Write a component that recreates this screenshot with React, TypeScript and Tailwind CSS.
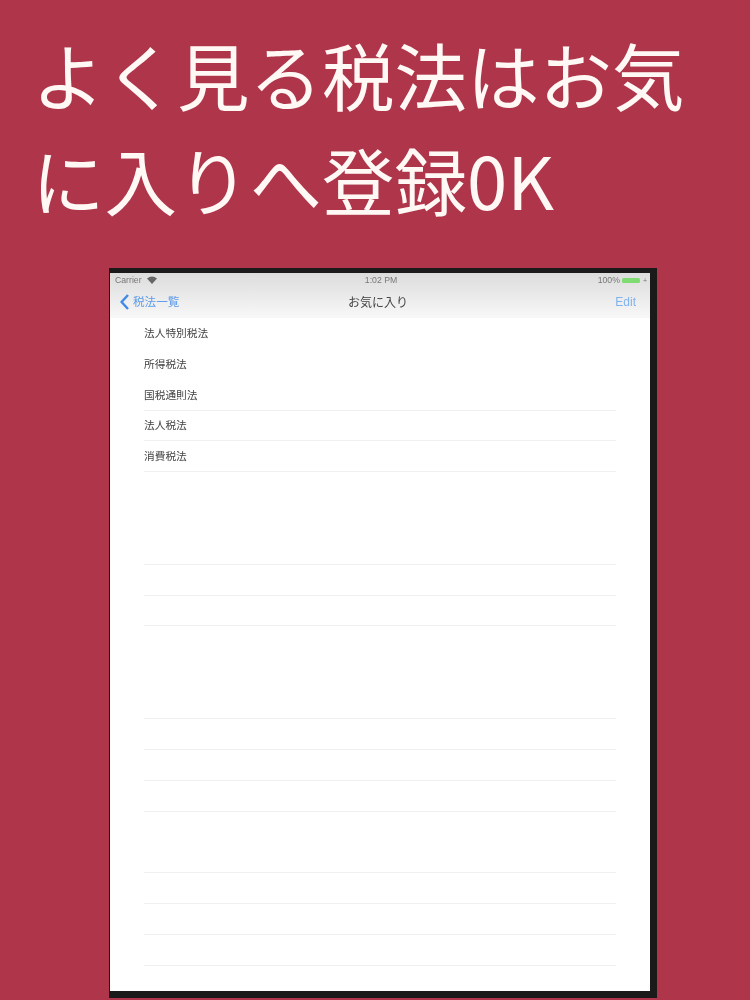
const CJK = "font-['Noto_Sans_CJK_JP','Noto_Sans',sans-serif]";

// rows of the table, in order; the ones without a title are empty cells
const FAVORITES = ["法人特別税法", "所得税法", "国税通則法", "法人税法", "消費税法"];
// which row separators show up in the screenshot
const VISIBLE_LINES = [2, 3, 4, 7, 8, 9, 12, 13, 14, 15, 17, 18, 19, 20];

function StatusBar() {
  return (
    <div className="flex h-[15px] items-center justify-between pl-[5px] pr-[3px] text-[8.7px] text-[#777] font-['Liberation_Sans',sans-serif]">
      <div className="flex w-[100px] items-center gap-[5px]">
        <span>Carrier</span>
        <svg width="10" height="8" viewBox="0 0 10 8" fill="#666">
          <path d="M0 2.6 Q5 -1.4 10 2.6 L5 8 Z" />
        </svg>
      </div>
      <span className="font-medium">1:02 PM</span>
      <div className="flex w-[100px] items-center justify-end gap-[1px]">
        <span>100%</span>
        <span className="ml-[1px] h-[5px] w-[18px] rounded-[1.5px] bg-[#7fdc72]" />
        <span className="ml-[2px] text-[7px] leading-none">+</span>
      </div>
    </div>
  );
}

function NavBar() {
  return (
    <div className={`flex h-[30px] items-center justify-between pb-[2px] pl-[10px] pr-[14px] ${CJK}`}>
      <div className="flex w-[100px] items-center gap-[4px] text-[11.6px] text-[#5a9bea]">
        <svg width="9" height="16" viewBox="0 0 9 16" fill="none" stroke="#3f8ae8" strokeWidth="2.4">
          <path d="M8 1 L1.6 8 L8 15" />
        </svg>
        <span>税法一覧</span>
      </div>
      <span className="text-[12px] text-[#444]">お気に入り</span>
      <span className="w-[100px] text-right text-[12px] text-[#7fb3ee] font-['Liberation_Sans',sans-serif]">Edit</span>
    </div>
  );
}

function Row({ title, line }: { title?: string; line: boolean }) {
  return (
    <div className="h-[30.85px] pl-[34px] pr-[34px]">
      <div className={`flex h-full items-center border-b text-[10.7px] text-[#444] ${line ? "border-[#f0f0f0]" : "border-transparent"}`}>
        {title}
      </div>
    </div>
  );
}

export default function App() {
  const rows = Array.from({ length: 21 }, (_, i) => i);

  return (
    <div className={`flex h-[1000px] w-[750px] flex-col overflow-hidden bg-[#ae354a] ${CJK}`}>
      <h1 className="ml-[32px] mt-[21px] h-[247px] text-[72.5px] font-normal leading-[105px] text-[#fff8f4]">
        よく見る税法はお気
        <br />
        に入りへ登録0K
      </h1>

      <div className="ml-[109px] h-[730px] w-[548px] bg-[#1a1a1a] pb-[7px] pl-[1px] pr-[7px] pt-[5px]">
        <div className="h-full overflow-hidden bg-white blur-[0.7px]">
          <div className="h-[45px] bg-gradient-to-b from-[#dcdcdc] to-[#f8f8f8]">
            <StatusBar />
            <NavBar />
          </div>
          {rows.map((i) => (
            <Row key={i} title={FAVORITES[i]} line={VISIBLE_LINES.includes(i)} />
          ))}
        </div>
      </div>
    </div>
  );
}
